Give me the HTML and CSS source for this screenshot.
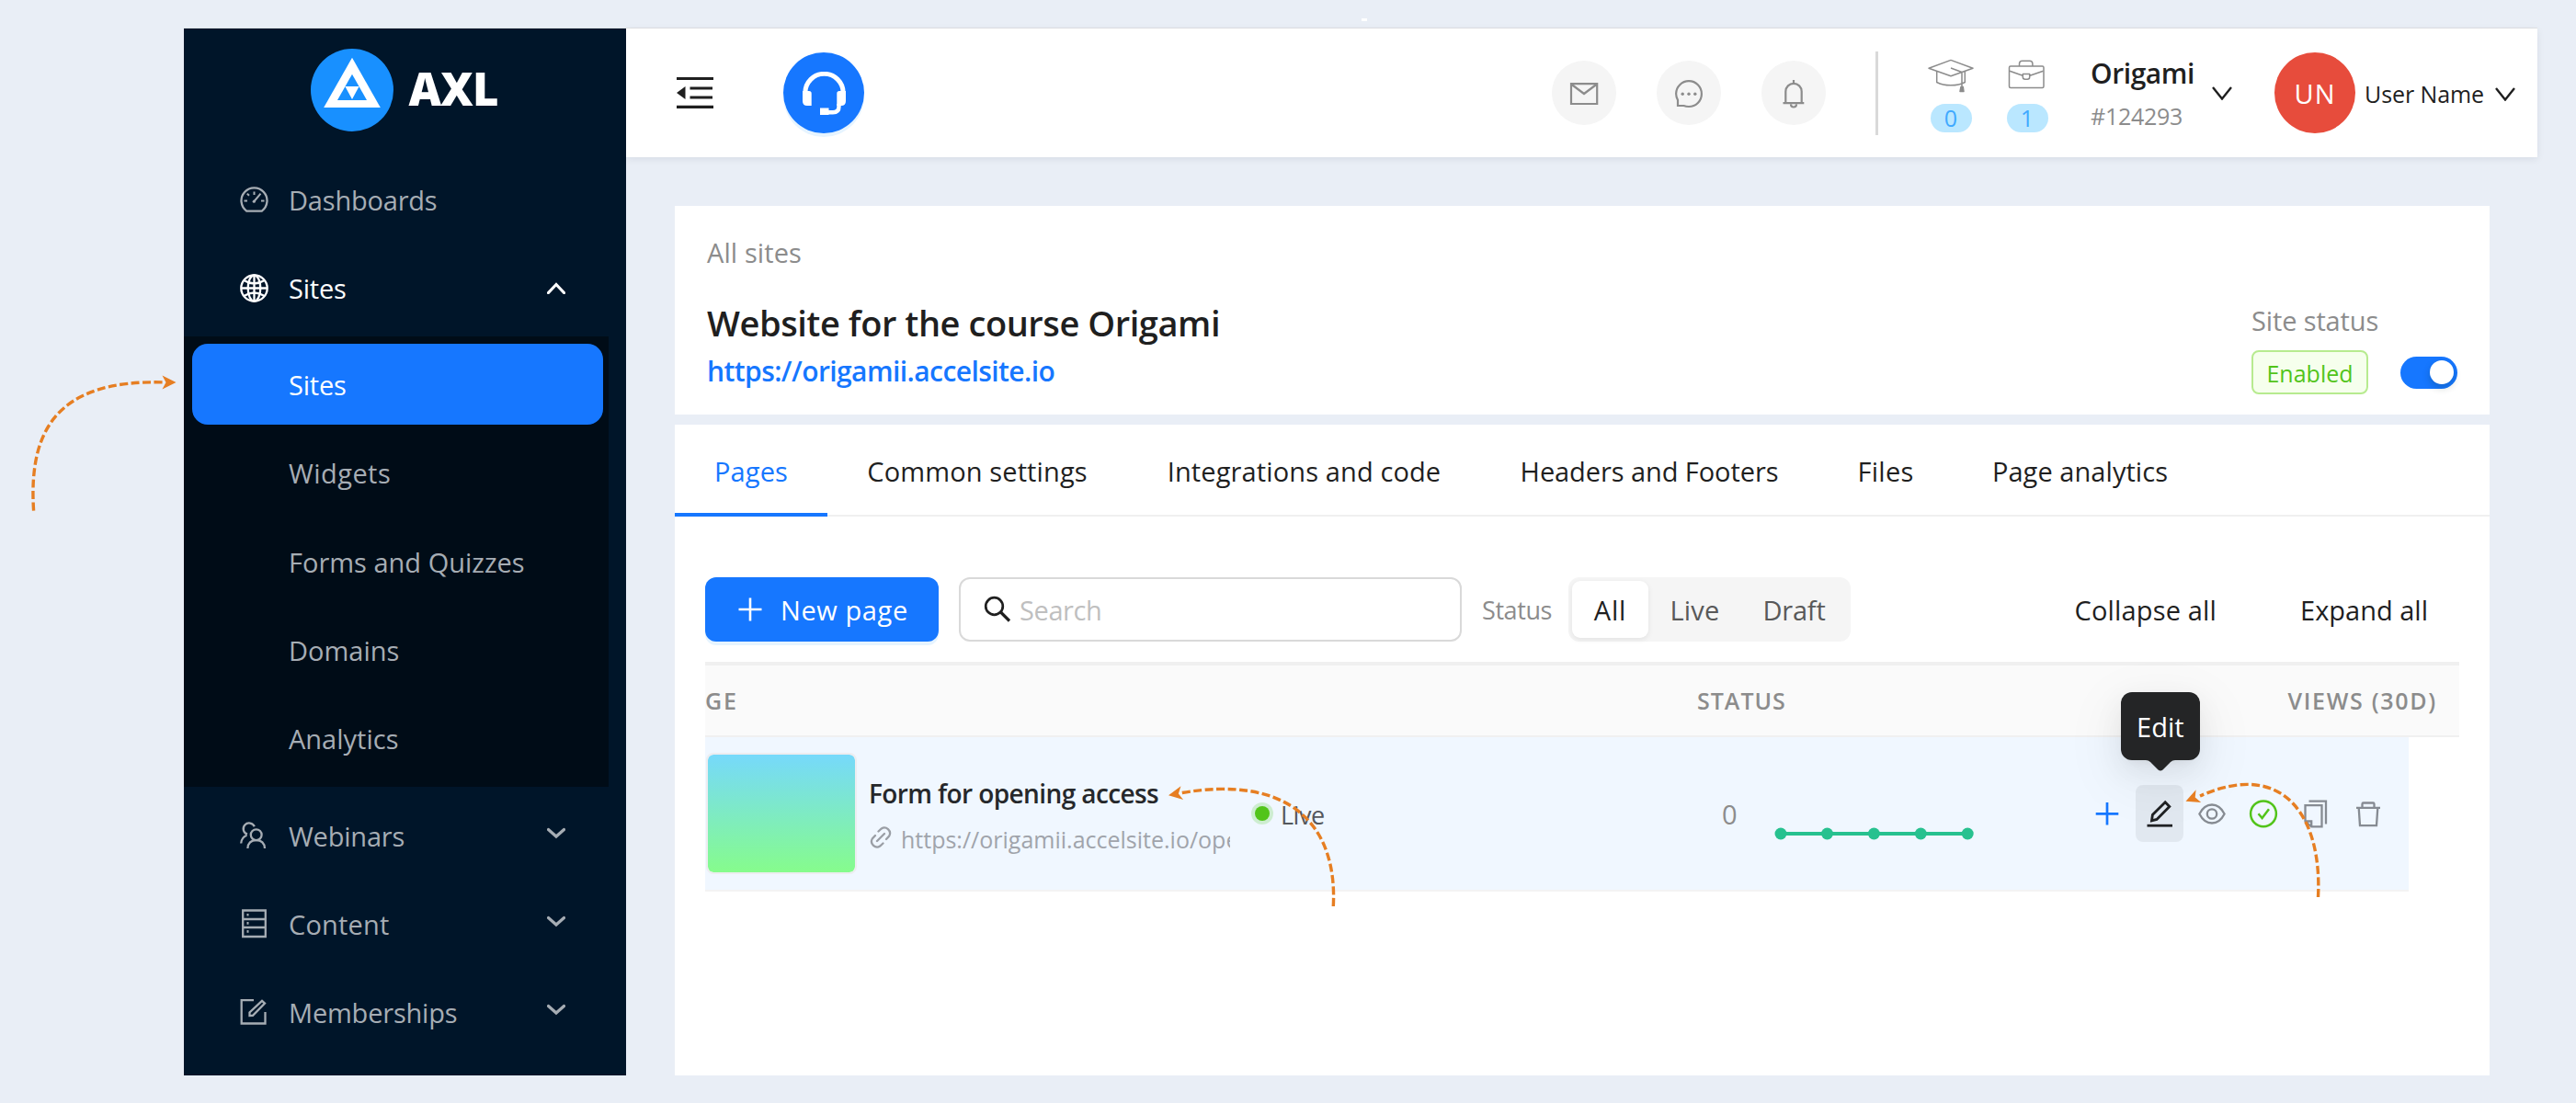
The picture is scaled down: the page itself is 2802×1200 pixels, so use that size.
FILE: index.html
```html
<!DOCTYPE html>
<html lang="en">
<head>
<meta charset="utf-8">
<title>AXL - Sites</title>
<link rel="stylesheet" href="styles.css">
</head>
<body>
<div class="shell">
  <aside class="sidebar">
    <div class="logo">
      <svg width="90" height="90" viewBox="0 0 90 90"><circle cx="45" cy="45" r="45" fill="#1890ff"/><path d="M45 9.8 14.2 64H75.8Z" fill="#fff"/><path d="M45 27.7 29 56H61Z" fill="#1890ff"/><path d="M37.4 41H52.6L45 55Z" fill="#fff"/></svg>
      <span class="logo-text">AXL</span>
    </div>
    <nav class="menu">
      <div class="item">
        <svg class="ic" viewBox="0 0 32 32"><path d="M7.2 27.6A14 14 0 1 1 23.8 27.6Z"/><path d="M15.5 6.5v3.5M4.5 16.5H8M23 16.5h3.5M7.8 8.6l2.2 2.2M15.5 17l7-8.4" stroke-width="2"/><circle cx="15.3" cy="17.2" r="1.6" fill="currentColor" stroke="none"/></svg>
        <span class="ls-dash">Dashboards</span>
      </div>
      <div class="item open">
        <svg class="ic" viewBox="0 0 32 32"><circle cx="15.5" cy="15.5" r="14.2"/><ellipse cx="15.5" cy="15.5" rx="6.8" ry="14.2"/><path d="M15.5 1.3v28.4M1.3 15.5h28.4M4.4 7q11 7 22.2 0M4.4 24q11-7 22.2 0"/></svg>
        <span class="ls-sites">Sites</span>
        <svg class="chev" viewBox="0 0 20 13"><path d="M1.5 11.5 10 2.5l8.5 9"/></svg>
      </div>
      <div class="submenu">
        <div class="sub active ls-sites">Sites</div>
        <div class="sub ls-widgets">Widgets</div>
        <div class="sub">Forms and Quizzes</div>
        <div class="sub">Domains</div>
        <div class="sub">Analytics</div>
      </div>
      <div class="item">
        <svg class="ic" viewBox="0 0 32 32"><circle cx="17.7" cy="15.2" r="5.9"/><path d="M8.4 30q.6-8.800 9.300-8.800T27 30M15.800 6.300A6.300 6.300 0 1 0 8 14.700M1.200 24.500q.4-6.500 6.300-8.800"/></svg>
        <span class="ls-dash">Webinars</span>
        <svg class="chev down" viewBox="0 0 20 13"><path d="M1.500 2.500 10 10l8.500-7.500"/></svg>
      </div>
      <div class="item">
        <svg class="ic" viewBox="0 0 32 32"><path d="M3.200 1.500h24.600v28.500H3.200ZM3.200 11h24.600M3.200 20h24.600"/><path d="M7.500 6.200h2M7.500 15.400h2M7.500 24.400h2" stroke-width="2.600"/></svg>
        <span class="ls-pos">Content</span>
        <svg class="chev down" viewBox="0 0 20 13"><path d="M1.500 2.500 10 10l8.500-7.500"/></svg>
      </div>
      <div class="item">
        <svg class="ic" viewBox="0 0 32 32"><path d="M15 2.200H1.700V27.500H27.500V15M10.500 19v-3.500L24 2.800 27 5.600 14 18.800Z"/></svg>
        <span class="ls-dash">Memberships</span>
        <svg class="chev down" viewBox="0 0 20 13"><path d="M1.500 2.500 10 10l8.500-7.500"/></svg>
      </div>
    </nav>
  </aside>

  <main class="main">
    <header class="header">
      <svg class="fold" width="40" height="36" viewBox="0 0 40 36"><path d="M0 2.500H40M14.500 13H39M14.500 23H39M0 33.300H40" stroke="#1f1f1f" stroke-width="3.200"/><path d="M0 18 9.500 11v14Z" fill="#1f1f1f"/></svg>
      <div class="support">
        <svg width="47" height="47" viewBox="0 0 47 47"><path d="M2.800 24v-1a20.700 20.700 0 0 1 41.400 0v1" fill="none" stroke="#fff" stroke-width="5"/><path d="M0 21H7q2.700 0 2.700 2.700V37H5Q0 37 0 32ZM47 21H40q-2.700 0-2.700 2.700V37H42Q47 37 47 32Z" fill="#fff"/><path d="M39.500 35v3q0 6.300-6.500 6.300H20" fill="none" stroke="#fff" stroke-width="4.400"/><path d="M19 39.500h9.500V47H19Z" fill="#fff"/></svg>
      </div>
      <div class="tools">
        <div class="round"><svg width="36" height="36" viewBox="0 0 36 36"><path d="M4 8.200H32.200V30H4ZM4 8.500 18 19 32 8.500"/></svg></div>
        <div class="round"><svg width="36" height="36" viewBox="0 0 36 36"><path d="M18 33A13.900 13.900 0 1 0 4.100 19q.1 4 1.900 6.800V32H12.500Q15 33 18 33Z"/><g fill="#8c8c8c" stroke="none"><circle cx="11.200" cy="19.300" r="1.700"/><circle cx="18" cy="19.300" r="1.700"/><circle cx="24.800" cy="19.300" r="1.700"/></g></svg></div>
        <div class="round"><svg width="36" height="36" viewBox="0 0 36 36"><path d="M18 4V7.500M9.300 29V16.500a8.700 8.700 0 0 1 17.400 0V29M6.500 29.200H29.300M15 30.500a3 3 0 0 0 6 0"/></svg></div>
      </div>
      <div class="divider"></div>
      <div class="stat">
        <svg width="50" height="44" viewBox="0 0 50 44"><path d="M1 16.300 25 7.400 49 16.300 25 24.700ZM9.700 20V31.500Q16 34.800 25 34.800T40.300 31.500V20M25 16 37 20.500V37.500"/><path d="M35 41.500 36 36.500H38.300L39 41.500Z" fill="#8c8c8c"/></svg>
        <span class="badge">0</span>
      </div>
      <div class="stat">
        <svg width="50" height="44" viewBox="0 0 50 44"><rect x="5.500" y="14" width="37.500" height="23.500" rx="1.500"/><path d="M16.500 14v-2.500q0-3.200 3.200-3.200h8q3.200 0 3.200 3.200V14M6 19.300 20.200 24.300M28 24.300 42.500 19.300M20.300 22.500h7.400v3.200q0 2.500-2.500 2.500h-2.400q-2.500 0-2.500-2.500Z"/></svg>
        <span class="badge">1</span>
      </div>
      <div class="account">
        <div class="acc-name">Origami</div>
        <div class="acc-id">#124293</div>
      </div>
      <svg class="caret" viewBox="0 0 22 15"><path d="M1 1 11 13.500 21 1"/></svg>
      <div class="avatar">UN</div>
      <div class="user">User Name</div>
      <svg class="caret second" viewBox="0 0 22 15"><path d="M1 1 11 13.500 21 1"/></svg>
    </header>

    <section class="card site">
      <div class="site-info">
        <div class="crumb">All sites</div>
        <h1 class="title">Website for the course Origami</h1>
        <a class="url">https://origamii.accelsite.io</a>
      </div>
      <div class="site-status">
        <div class="status-label">Site status</div>
        <div class="status-row"><span class="tag">Enabled</span><span class="switch"><i></i></span></div>
      </div>
    </section>

    <section class="card pages">
      <div class="tabs">
        <div class="tab on">Pages</div>
        <div class="tab t2">Common settings</div>
        <div class="tab t3">Integrations and code</div>
        <div class="tab t4">Headers and Footers</div>
        <div class="tab t5">Files</div>
        <div class="tab t6">Page analytics</div>
      </div>
      <div class="toolbar">
        <button class="new"><svg width="26" height="26" viewBox="0 0 26 26"><path d="M13 .5v25M.5 13h25" stroke="#fff" stroke-width="2.600"/></svg><span>New page</span></button>
        <div class="search"><svg width="30" height="30" viewBox="0 0 30 30"><circle cx="11.500" cy="11.500" r="9.300"/><path d="M18.500 18 28 27.500" stroke-width="3.200"/></svg><span>Search</span></div>
        <span class="filter-label">Status</span>
        <div class="segmented"><span class="seg all">All</span><span class="seg live">Live</span><span class="seg draft">Draft</span></div>
        <div class="links"><span class="collapse">Collapse all</span><span>Expand all</span></div>
      </div>
      <div class="table">
        <div class="thead"><span class="ge">GE</span><span class="st">STATUS</span><span class="vw">VIEWS (30D)</span></div>
        <div class="row">
          <div class="thumb"></div>
          <div class="page-info">
            <div class="page-title">Form for opening access</div>
            <div class="page-url"><svg width="24" height="24" viewBox="0 0 24 24"><path d="M9.500 5.500 12.800 2.500Q16.500 0 20 3.200T21.200 10.500L18 14M14.500 18.500 11.200 21.500Q7.500 24 4 20.800T2.800 13.500L6 10M8 16l8-8"/></svg><span>https://origamii.accelsite.io/ope</span></div>
          </div>
          <span class="dot"></span>
          <span class="live-text">Live</span>
          <span class="count">0</span>
          <svg class="spark" width="220" height="60" viewBox="0 0 220 60"><path d="M9 52H211.500" stroke="#27c18f" stroke-width="4"/><g fill="#27c18f"><circle cx="9" cy="52" r="6.500"/><circle cx="59.500" cy="52" r="6.500"/><circle cx="110.400" cy="52" r="6.500"/><circle cx="161.300" cy="52" r="6.500"/><circle cx="212.200" cy="52" r="6.500"/></g></svg>
          <div class="actions">
            <div class="act add"><svg viewBox="0 0 36 36"><path d="M18 6v24.500M5.700 18.300h24.600"/></svg></div>
            <div class="act edit"><svg viewBox="0 0 36 36"><path d="M4.500 31.200H32" stroke-width="2.800"/><path d="M9.500 25.800 10.400 19.500 24.200 5.800 28.800 10.400 15 24.400 9.500 25.800Z" stroke-width="2.800"/></svg>
              <div class="tip">Edit<svg class="tip-arrow" width="32" height="12" viewBox="0 0 32 12"><path d="M0 0Q3 0 5 2L13.500 10.500Q16 12.500 18.500 10.500L27 2Q29 0 32 0Z" fill="#242526"/></svg></div>
            </div>
            <div class="act"><svg viewBox="0 0 36 36"><path d="M4.400 18.500Q9.500 8.500 18 8.500T31.600 18.500Q26.500 28.500 18 28.500T4.400 18.500Z"/><circle cx="18" cy="18.500" r="5.200"/></svg></div>
            <div class="act ok"><svg viewBox="0 0 36 36"><circle cx="18" cy="18.300" r="13.900"/><path d="M12.500 18.200 16.600 23 24 13.300"/></svg></div>
            <div class="act"><svg viewBox="0 0 36 36"><path d="M10.500 4.600H29V29.500M6.500 9.200H24.500V32.300H13.200L6.500 26.500ZM6.500 26.500H13.200V32.300"/></svg></div>
            <div class="act"><svg viewBox="0 0 36 36"><path d="M5 11.800H31M7.700 11.800 9 31.200H27L28.300 11.800M11.500 11.500V7.800Q11.500 6.500 12.800 6.500H23.200Q24.500 6.500 24.500 7.800V11.500"/></svg></div>
          </div>
        </div>
      </div>
    </section>
  </main>
</div>
<div class="speck"></div>
<svg class="notes" width="2802" height="1200" viewBox="0 0 2802 1200">
  <g fill="none" stroke="#e67e22" stroke-width="3.400" stroke-dasharray="9 3.500">
    <path d="M36.600 555.600C31 470 60 412 180 416"/>
    <path d="M1450.300 986C1455 895 1400 842 1283 863"/>
    <path d="M2521.500 976C2526 890 2485 825 2393 866"/>
  </g>
  <g fill="#e67e22">
    <path d="M0 0-15-7.500-11 0-15 7.500Z" transform="translate(191.500 416)"/>
    <path d="M0 0-15-7.500-11 0-15 7.500Z" transform="translate(1271 865.300) rotate(170)"/>
    <path d="M0 0-15-7.500-11 0-15 7.500Z" transform="translate(2377.500 871.700) rotate(158)"/>
  </g>
</svg>
</body>
</html>
```

FILE: styles.css
```css
* { box-sizing: border-box; }
body {
  margin: 0; width: 2802px; height: 1200px; padding: 30px 42px 30px 200px;
  position: relative; overflow: hidden; background: #e9eef6;
  font: 400 29px "Open Sans", "Noto Sans", sans-serif; color: #1f1f1f;
}
svg { display: block; flex: none; }
.shell { display: flex; height: 1140px; border-top: 1px solid #e0e2e5; }

/* Sidebar */
.sidebar { width: 481px; flex: none; background: #001529; color: #a6adb4; }
.logo { height: 138.5px; padding: 22px 0 0 137.5px; display: flex; align-items: flex-start; }
.logo-text { margin-left: 17px; padding-bottom: 4px; line-height: 87px; font-size: 49px; font-weight: 800; letter-spacing: -.8px; color: #fff; }
.item { height: 96.250px; padding: 0 66px 0 61px; display: flex; align-items: center; white-space: nowrap; }
.item.open { color: #fff; }
.ic { width: 32px; height: 32px; margin-right: 21px; fill: none; stroke: currentColor; stroke-width: 2.300; }
.chev { width: 20px; height: 13px; margin-left: auto; fill: none; stroke: currentColor; stroke-width: 3.200; stroke-linecap: round; }
.chev.down { position: relative; top: -3px; }
.submenu { width: 462px; height: 490px; margin: 4px 0 5px; padding: 8px 6px 0 9px; background: #000c17; }
.sub { height: 88px; margin-bottom: 8.250px; padding-left: 105px; line-height: 89px; white-space: nowrap; }
.sub.active { background: #1677ff; color: #fff; border-radius: 17px; }
.ls-dash, .ls-sites { letter-spacing: -.2px; }
.ls-widgets { letter-spacing: .45px; }
.ls-pos { letter-spacing: .18px; }

/* Header */
.main { flex: 1; display: flex; flex-direction: column; }
.header { height: 140px; flex: none; padding: 0 24px 0 55px; display: flex; align-items: center; background: #fff; box-shadow: 0 2px 8px rgba(0, 21, 41, .08); }
.support { width: 88px; height: 88px; margin-left: 76px; display: flex; align-items: center; justify-content: center; border-radius: 50%; background: #1677ff; box-shadow: 0 4px 0 #e6f4ff; }
.tools { display: flex; gap: 44px; margin-left: auto; }
.round { width: 70px; height: 70px; display: flex; align-items: center; justify-content: center; border-radius: 50%; background: #f5f5f5; }
.round svg { fill: none; stroke: #8c8c8c; stroke-width: 2.200; }
.divider { width: 3px; height: 91px; margin: 0 54px; background: #d9d9d9; }
.stat { width: 50px; margin-right: 33px; display: flex; flex-direction: column; align-items: center; }
.stat svg { fill: none; stroke: #8c8c8c; stroke-width: 1.500; stroke-linejoin: round; }
.badge { width: 45px; height: 31px; margin-top: 11px; border-radius: 16px; background: #bae7ff; color: #40a9ff; font-size: 25px; line-height: 30px; text-align: center; }
.account { width: 112px; margin-left: 11px; padding-top: 3px; white-space: nowrap; }
.acc-name { font-size: 30px; font-weight: 600; line-height: 46px; letter-spacing: -.43px; }
.acc-id { font-size: 25px; line-height: 46px; letter-spacing: -.27px; color: #8c8c8c; }
.caret { width: 22px; height: 15px; margin-left: 20px; fill: none; stroke: #1f1f1f; stroke-width: 2.400; }
.caret.second { margin: 2px 0 0 12px; }
.avatar { width: 88px; height: 88px; margin-left: 46px; border-radius: 50%; background: #e74c3c; color: #fff; line-height: 89px; text-align: center; letter-spacing: 1px; }
.user { width: 130px; margin-left: 10px; padding-top: 1px; font-size: 25px; white-space: nowrap; letter-spacing: -.09px; }

/* Site card */
.card { width: 1974px; margin-left: 53px; background: #fff; }
.site { height: 227px; flex: none; margin-top: 53px; padding: 26px 35px 22px; display: flex; justify-content: space-between; }
.crumb { line-height: 50px; color: #8c8c8c; letter-spacing: .1px; }
.title { margin: 21px 0 0; font-size: 38px; font-weight: 600; line-height: 60px; letter-spacing: -.44px; }
.url { display: block; font-size: 30px; font-weight: 600; line-height: 46px; letter-spacing: -.57px; color: #1677ff; }
.site-status { width: 224px; align-self: flex-end; }
.status-label { line-height: 41px; letter-spacing: -.13px; color: #8c8c8c; }
.status-row { margin-top: 12px; display: flex; align-items: center; justify-content: space-between; }
.tag { width: 127px; height: 48px; border: 2px solid #b7eb8f; border-radius: 8px; background: #f6ffed; color: #52c41a; font-size: 25px; line-height: 46px; text-align: center; }
.switch { width: 62px; height: 35px; padding: 4.500px; display: flex; justify-content: flex-end; border-radius: 18px; background: #1677ff; }
.switch i { width: 26px; height: 26px; border-radius: 50%; background: #fff; box-shadow: 0 4px 8px rgba(0, 35, 11, .2); }

/* Tabs */
.pages { flex: 1; margin-top: 11px; }
.tabs { height: 100px; display: flex; border-bottom: 2px solid #f0f0f0; }
.tab { height: 100px; padding-top: 1px; line-height: 100px; text-align: center; letter-spacing: .12px; white-space: nowrap; }
.tab.on { width: 166px; border-bottom: 4px solid #1677ff; color: #1677ff; }
.t2 { width: 326px; }
.t3 { width: 385px; }
.t4 { width: 366px; letter-spacing: -.08px; }
.t5 { width: 148px; letter-spacing: .28px; }
.t6 { width: 275px; letter-spacing: .06px; }

/* Toolbar */
.toolbar { height: 70px; margin: 66px 67px 0 33px; display: flex; align-items: center; white-space: nowrap; }
.new { width: 254px; height: 70px; padding: 0 0 0 36px; display: flex; align-items: center; border: 0; border-radius: 12px; background: #1677ff; color: #fff; font: inherit; letter-spacing: .6px; box-shadow: 0 4px 0 #e6f4ff; }
.new span { margin-left: 20px; padding-top: 1px; }
.search { width: 547px; height: 70px; margin-left: 22px; padding-left: 25px; display: flex; align-items: center; border: 2px solid #d9d9d9; border-radius: 12px; color: #bfbfbf; letter-spacing: -.4px; }
.search svg { margin-right: 9px; fill: none; stroke: #1f1f1f; stroke-width: 2.700; }
.search span { padding-top: 1px; }
.filter-label { width: 94px; margin-left: 22px; padding-top: 1px; font-size: 27px; letter-spacing: -.42px; color: #8c8c8c; }
.segmented { width: 307px; height: 70px; padding: 4px; display: flex; border-radius: 12px; background: #f5f5f5; color: #595959; }
.seg { height: 62px; line-height: 63px; text-align: center; }
.all { width: 83px; border-radius: 9px; background: #fff; color: #1f1f1f; letter-spacing: .8px; box-shadow: 0 2px 6px rgba(0, 0, 0, .08); }
.live { width: 101px; letter-spacing: .2px; }
.draft { width: 115px; letter-spacing: -.2px; }
.links { margin-left: auto; display: flex; gap: 91px; }
.collapse { letter-spacing: .16px; }

/* Table */
.table { margin: 22px 33px 0; }
.thead { height: 82px; display: grid; grid-template-columns: 1079px 1fr auto; align-items: center; padding-right: 24px; border-top: 4px solid #f0f0f0; border-bottom: 2px solid #f0f0f0; background: #fafafa; color: #8c8c8c; font-size: 25px; font-weight: 600; }
.ge { letter-spacing: 1.800px; }
.st { letter-spacing: 1px; }
.vw { letter-spacing: 1.700px; }
.row { width: 1853px; height: 168px; padding: 0 18px 0 1px; display: flex; align-items: center; background: #f0f7ff; border-bottom: 2px solid #f3f3f3; white-space: nowrap; }
.thumb { width: 164px; height: 132px; flex: none; border: 2px solid #ededf0; border-radius: 8px; background: linear-gradient(#76d9fb, #86fc8c) padding-box; }
.page-info { width: 393px; flex: none; margin-left: 13px; padding-top: 6px; overflow: hidden; }
.page-title { font-size: 28px; font-weight: 600; line-height: 49px; letter-spacing: -.6px; color: #26282b; }
.page-url { height: 49px; display: flex; align-items: center; font-size: 25px; color: #a0a4ab; }
.page-url svg { margin: -3px 10px 0 1px; fill: none; stroke: #9a9ea5; stroke-width: 2.300; stroke-linecap: round; }
.dot { width: 16px; height: 16px; margin-left: 27px; flex: none; border-radius: 50%; background: #52c41a; box-shadow: 0 0 0 4px #cdedd0; }
.live-text { width: 480px; margin-left: 12px; padding-top: 2px; font-size: 27px; letter-spacing: -.47px; color: #54585d; }
.count { width: 55px; color: #8c8c8c; }
.actions { display: flex; gap: 4.800px; margin-left: auto; }
.act { position: relative; width: 52px; height: 62px; display: flex; align-items: center; justify-content: center; border-radius: 8px; }
.act > svg { width: 36px; height: 36px; fill: none; stroke: #868b92; stroke-width: 2.300; }
.act.add > svg { stroke: #1677ff; stroke-width: 2.700; }
.act.ok > svg { stroke: #52c41a; stroke-width: 2.500; }
.act.edit { background: rgba(0, 0, 0, .06); }
.act.edit > svg { stroke: #1f2123; }
.tip { position: absolute; left: -16px; top: -101px; width: 86px; height: 74px; border-radius: 12px; background: #242526; color: #fff; line-height: 76px; text-align: center; box-shadow: 0 12px 32px rgba(0, 0, 0, .07), 0 6px 12px -8px rgba(0, 0, 0, .1), 0 18px 56px 16px rgba(0, 0, 0, .04); }
.tip-arrow { position: absolute; left: 27px; top: 73.500px; }

/* Annotations */
.speck { position: absolute; left: 1481px; top: 20px; width: 6px; height: 3px; background: #fff; }
.notes { position: absolute; left: 0; top: 0; }
```
